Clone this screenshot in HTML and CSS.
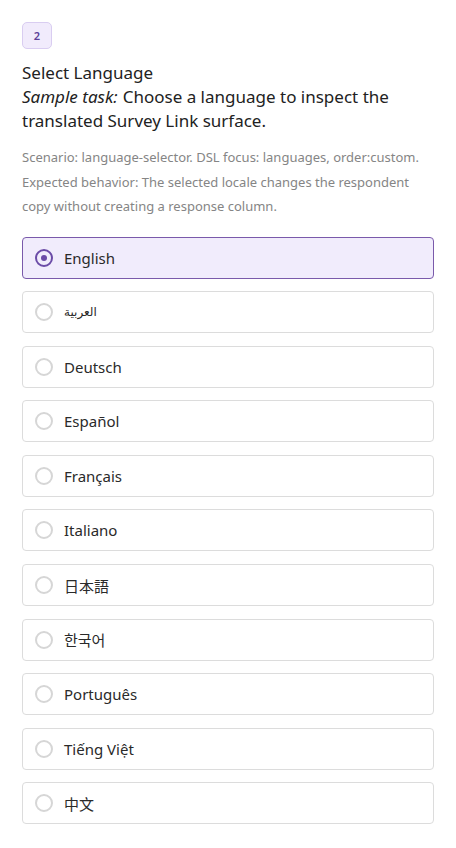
FILE: index.html
```html
<!DOCTYPE html>
<html lang="en">
<head>
<meta charset="utf-8">
<link rel="stylesheet" href="styles.css">
</head>
<body>
<main class="page">
  <div class="badge">2</div>
  <h1 class="title"><span class="line">Select Language</span><span class="line"><em class="lead">Sample task:</em><span>Choose a language to inspect the</span></span><span class="line">translated Survey Link surface.</span></h1>
  <p class="desc">Scenario: language-selector. DSL focus: languages, order:custom. Expected behavior: The selected locale changes the respondent copy without creating a response column.</p>
  <div class="options">
    <label class="option selected"><span class="radio"></span><span class="label">English</span></label>
    <label class="option"><span class="radio"></span><span class="label" lang="ar">العربية</span></label>
    <label class="option"><span class="radio"></span><span class="label">Deutsch</span></label>
    <label class="option"><span class="radio"></span><span class="label">Español</span></label>
    <label class="option"><span class="radio"></span><span class="label">Français</span></label>
    <label class="option"><span class="radio"></span><span class="label">Italiano</span></label>
    <label class="option"><span class="radio"></span><span class="label" lang="ja">日本語</span></label>
    <label class="option"><span class="radio"></span><span class="label" lang="ko">한국어</span></label>
    <label class="option"><span class="radio"></span><span class="label">Português</span></label>
    <label class="option"><span class="radio"></span><span class="label">Tiếng Việt</span></label>
    <label class="option"><span class="radio"></span><span class="label" lang="zh">中文</span></label>
  </div>
</main>
</body>
</html>
```
FILE: styles.css
```css
html, body {
  margin: 0;
  padding: 0;
  background: #ffffff;
}
body {
  font-family: "Noto Sans", "Noto Sans CJK KR", sans-serif;
  color: #222222;
}
.page {
  padding: 22px 22px 20px;
}
.badge {
  display: inline-flex;
  align-items: center;
  justify-content: center;
  width: 30px;
  height: 27px;
  box-sizing: border-box;
  border: 1px solid #d9cdf1;
  background: #f1ebfc;
  border-radius: 5px;
  color: #5c3f99;
  font-size: 11px;
  font-weight: 600;
}
.title {
  margin: 12px 0 0;
  font-size: 17px;
  font-weight: 400;
  line-height: 24px;
  color: #222222;
}
.title .line {
  display: block;
  white-space: nowrap;
}
.title .lead {
  display: inline-block;
  font-style: italic;
  margin-right: 5px;
}
.desc {
  margin: 12px 0 0;
  font-size: 13px;
  line-height: 24.5px;
  color: #858585;
}
.options {
  margin-top: 18px;
  display: flex;
  flex-direction: column;
  gap: 12.6px;
}
.option {
  display: flex;
  align-items: center;
  gap: 11px;
  height: 42px;
  box-sizing: border-box;
  padding: 0 12px;
  border: 1px solid #dcdcdc;
  border-radius: 4px;
  background: #ffffff;
  font-size: 15px;
  color: #2a2a2a;
}
.option.selected {
  background: #f1ecfc;
  border-color: #7a5aab;
}
.radio {
  width: 18px;
  height: 18px;
  box-sizing: border-box;
  border: 2px solid #d6d6d6;
  border-radius: 50%;
  flex: none;
  display: flex;
  align-items: center;
  justify-content: center;
}
.selected .radio {
  border-color: #6b4ba7;
}
.selected .radio::after {
  content: "";
  width: 6px;
  height: 6px;
  border-radius: 50%;
  background: #6b4ba7;
}
.label[lang="ar"] {
  font-family: "DejaVu Sans", sans-serif;
  font-size: 12px;
}
.label[lang="ja"] { font-family: "Noto Sans CJK JP", sans-serif; }
.label[lang="ko"] { font-family: "Noto Sans CJK KR", sans-serif; }
.label[lang="zh"] { font-family: "Noto Sans CJK SC", sans-serif; }
```
